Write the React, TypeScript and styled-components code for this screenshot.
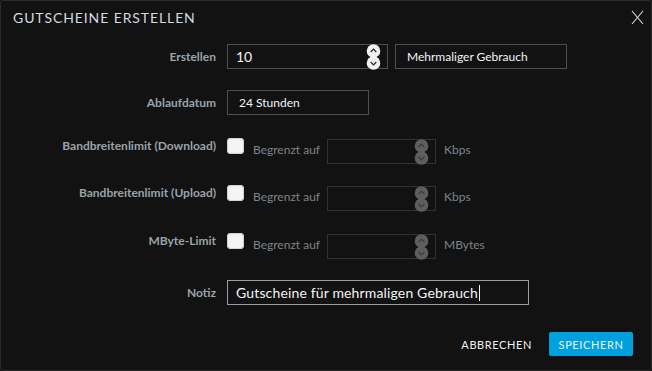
import React from "react";
import styled, { createGlobalStyle } from "styled-components";

const Global = createGlobalStyle`
  html, body { margin: 0; padding: 0; background: #121212; }
  body { font-family: Lato, "Open Sans", sans-serif; }
  * { box-sizing: border-box; }
`;

const Dialog = styled.div`
  width: 652px;
  height: 371px;
  background: #121212;
  border: 1px solid #2a2a2a;
  border-radius: 3px;
  display: flex;
  flex-direction: column;
  overflow: hidden;
`;

const Header = styled.div`
  height: 33px;
  display: flex;
  align-items: center;
  justify-content: space-between;
  padding: 0 7px 0 12px;
`;

const Title = styled.div`
  font-size: 14px;
  font-weight: 400;
  letter-spacing: 0.9px;
  color: #d3dae0;
`;

const CloseButton = styled.button`
  background: none;
  border: none;
  padding: 0;
  width: 13px;
  height: 15px;
  display: flex;
  cursor: pointer;
`;

const Body = styled.div`
  display: flex;
  flex-direction: column;
`;

const Row = styled.div<{ $top: number; $align?: string }>`
  display: flex;
  align-items: ${(p) => p.$align || "center"};
  margin-top: ${(p) => p.$top}px;
`;

const Label = styled.div<{ $offset?: number }>`
  width: 215px;
  text-align: right;
  font-size: 12px;
  font-weight: 700;
  color: #9aa3ab;
  line-height: 16px;
  margin-right: 11px;
  margin-top: ${(p) => p.$offset || 0}px;
`;

const Field = styled.div<{ $w: number; $disabled?: boolean; $focused?: boolean; $mr?: number; $mt?: number }>`
  position: relative;
  width: ${(p) => p.$w}px;
  height: 25px;
  border: 1px solid
    ${(p) => (p.$focused ? "#9a9ea2" : p.$disabled ? "#2e3235" : "#4a5056")};
  display: flex;
  align-items: center;
  margin-right: ${(p) => p.$mr || 0}px;
  margin-top: ${(p) => p.$mt || 0}px;
  background: #121212;
`;

const FieldText = styled.span<{ $size: number; $pad: number; $ls?: number }>`
  font-size: ${(p) => p.$size}px;
  letter-spacing: ${(p) => p.$ls || 0}px;
  color: #f2f4f6;
  padding-left: ${(p) => p.$pad}px;
  white-space: nowrap;
`;

const Caret = styled.span`
  display: inline-block;
  width: 1px;
  height: 16px;
  background: #f2f4f6;
  vertical-align: -3px;
  margin-left: 1px;
`;

const SpinnerBox = styled.div`
  position: absolute;
  right: 6px;
  top: -1px;
  width: 15px;
  height: 26px;
  display: flex;
`;

const Checkbox = styled.div`
  width: 17px;
  height: 16px;
  border-radius: 4px;
  background: #f4f4f4;
  box-shadow: inset 0 0 1px 1px #cfcfcf;
  margin-right: 9px;
`;

const Muted = styled.div<{ $mr?: number; $mt?: number }>`
  font-size: 12px;
  color: #7b848c;
  line-height: 16px;
  margin-right: ${(p) => p.$mr || 0}px;
  margin-top: ${(p) => p.$mt || 0}px;
`;

const Footer = styled.div`
  margin-top: 27px;
  display: flex;
  justify-content: flex-end;
  align-items: center;
  padding-right: 18px;
  gap: 17px;
`;

const TextButton = styled.button`
  background: none;
  border: none;
  padding: 0;
  font-family: Lato, sans-serif;
  font-size: 11px;
  letter-spacing: 0.6px;
  color: #eef2f5;
  cursor: pointer;
`;

const PrimaryButton = styled.button`
  width: 84px;
  height: 24px;
  background: #00a0df;
  border: none;
  border-radius: 2px;
  font-family: Lato, sans-serif;
  font-size: 11px;
  letter-spacing: 0.6px;
  color: #e6f5fc;
  cursor: pointer;
`;

const Spinner = ({ disabled }: { disabled?: boolean }) => {
  const fill = disabled ? "#5e5e5e" : "#f0f0f0";
  const stroke = disabled ? "#3a3a3a" : "#222";
  return (
    <SpinnerBox>
      <svg width="15" height="26" viewBox="0 0 15 26">
        <circle cx="7.5" cy="7" r="6.8" fill={fill} />
        <circle cx="7.5" cy="19" r="6.8" fill={fill} />
        <path d="M4.7 8 L7.5 5.2 L10.3 8" fill="none" stroke={stroke} strokeWidth="1.2" />
        <path d="M4.7 18 L7.5 20.8 L10.3 18" fill="none" stroke={stroke} strokeWidth="1.2" />
      </svg>
    </SpinnerBox>
  );
};

const LimitRow = ({ label, unit, top }: { label: string; unit: string; top: number }) => (
  <Row $top={top} $align="flex-start">
    <Label>{label}</Label>
    <Checkbox />
    <Muted $mr={7} $mt={4}>Begrenzt auf</Muted>
    <Field $w={109} $disabled $mr={8} $mt={1}>
      <Spinner disabled />
    </Field>
    <Muted $mt={4}>{unit}</Muted>
  </Row>
);

export default function App() {
  return (
    <>
      <Global />
      <Dialog>
        <Header>
          <Title>GUTSCHEINE ERSTELLEN</Title>
          <CloseButton aria-label="close">
            <svg width="13" height="15" viewBox="0 0 13 15">
              <path d="M1 1 L12 14 M12 1 L1 14" stroke="#d7dde3" strokeWidth="1.1" fill="none" />
            </svg>
          </CloseButton>
        </Header>
        <Body>
          <Row $top={10}>
            <Label>Erstellen</Label>
            <Field $w={161} $mr={7}>
              <FieldText $size={14} $pad={8}>10</FieldText>
              <Spinner />
            </Field>
            <Field $w={172}>
              <FieldText $size={12} $pad={11}>Mehrmaliger Gebrauch</FieldText>
            </Field>
          </Row>
          <Row $top={21}>
            <Label>Ablaufdatum</Label>
            <Field $w={142}>
              <FieldText $size={12} $pad={11}>24 Stunden</FieldText>
            </Field>
          </Row>
          <LimitRow label="Bandbreitenlimit (Download)" unit="Kbps" top={23} />
          <LimitRow label="Bandbreitenlimit (Upload)" unit="Kbps" top={21} />
          <LimitRow label="MByte-Limit" unit="MBytes" top={22} />
          <Row $top={21}>
            <Label>Notiz</Label>
            <Field $w={302} $focused>
              <FieldText $size={14} $pad={8} $ls={0.15}>
                Gutscheine für mehrmaligen Gebrauch
                <Caret />
              </FieldText>
            </Field>
          </Row>
        </Body>
        <Footer>
          <TextButton>ABBRECHEN</TextButton>
          <PrimaryButton>SPEICHERN</PrimaryButton>
        </Footer>
      </Dialog>
    </>
  );
}
